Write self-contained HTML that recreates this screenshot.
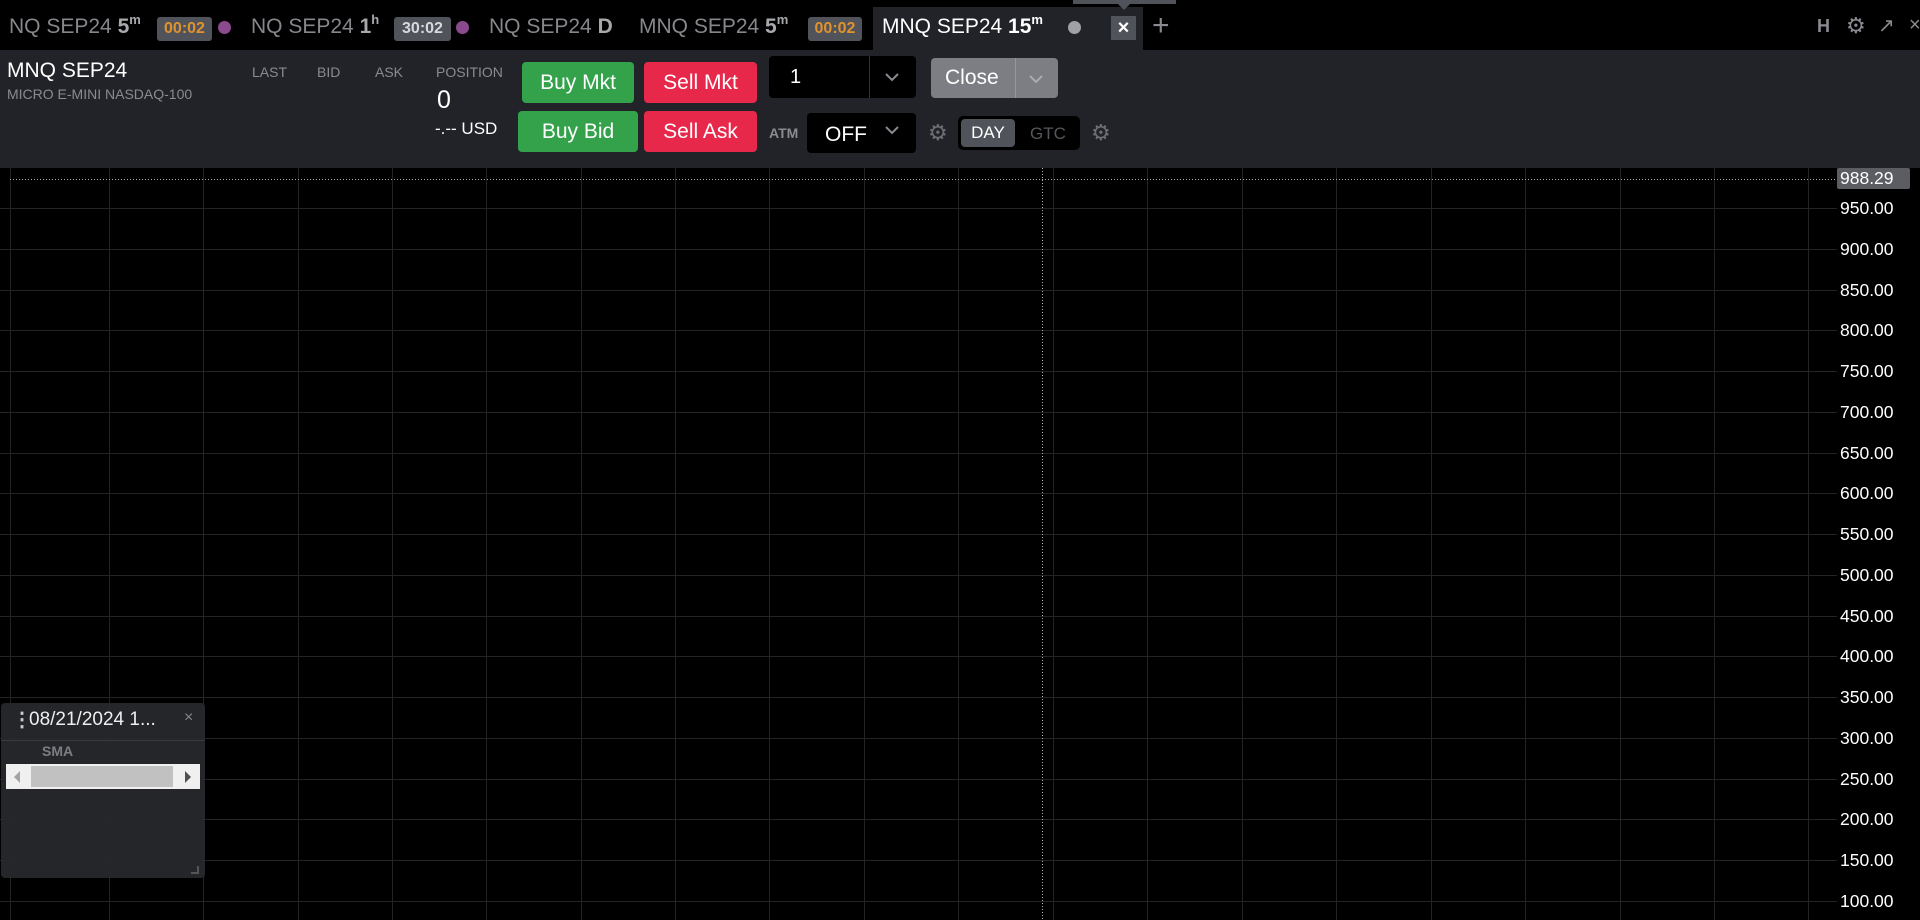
<!DOCTYPE html>
<html><head><meta charset="utf-8"><style>
*{margin:0;padding:0;box-sizing:border-box}
body{width:1920px;height:920px;background:#000;overflow:hidden;position:relative;font-family:"Liberation Sans",sans-serif;color:#fff}
.a{position:absolute;white-space:nowrap}
.tab{font-size:21px;color:#86878c;top:15px;line-height:24px}
.tab b{color:#a8a9ad}
.tab sup{font-size:13px;vertical-align:baseline;position:relative;top:-9px;line-height:0}
.badge{position:absolute;top:17px;height:24px;background:#50535a;border-radius:3px;font-size:16px;font-weight:bold;line-height:24px;text-align:center}
.dot{position:absolute;width:13px;height:13px;border-radius:50%;top:21px}
.lbl{font-size:14px;color:#8a8b90}
.btn{position:absolute;border-radius:4px;color:#fff;font-size:21px;text-align:center}
.g{background:#34a24b}.r{background:#e8284b}
.yl{position:absolute;left:1840px;font-size:17.5px;color:#fff;line-height:20px}
</style></head><body>
<!-- tab bar -->
<div class="a" style="left:0;top:0;width:1920px;height:50px;background:#000"></div>
<div class="a tab" style="left:9px">NQ SEP24 <b>5<sup>m</sup></b></div>
<div class="badge" style="left:157px;width:55px;color:#e0922e">00:02</div>
<div class="dot" style="left:218px;background:#8b4a8e"></div>
<div class="a tab" style="left:251px">NQ SEP24 <b>1<sup>h</sup></b></div>
<div class="badge" style="left:394px;width:57px;color:#d8d9dc">30:02</div>
<div class="dot" style="left:456px;background:#8b4a8e"></div>
<div class="a tab" style="left:489px">NQ SEP24 <b>D</b></div>
<div class="a tab" style="left:639px">MNQ SEP24 <b>5<sup>m</sup></b></div>
<div class="badge" style="left:808px;width:54px;color:#e0922e">00:02</div>
<div class="a" style="left:873px;top:7px;width:270px;height:43px;background:#222328"></div>
<div class="a tab" style="left:882px;color:#fff">MNQ SEP24 <b style="color:#fff">15<sup>m</sup></b></div>
<div class="dot" style="left:1068px;background:#a0a1a5"></div>
<div class="a" style="left:1111px;top:16px;width:25px;height:24px;background:#50535a;color:#fff;font-size:20px;font-weight:bold;text-align:center;line-height:24px">×</div>
<div class="a" style="left:1152px;top:9px;font-size:30px;color:#8a8b90;line-height:34px">+</div>
<div class="a" style="left:1073px;top:0;width:103px;height:4px;background:#50535a"></div>
<div class="a" style="left:1118px;top:4px;width:0;height:0;border-left:6px solid transparent;border-right:6px solid transparent;border-top:6px solid #50535a"></div>
<div class="a" style="left:1817px;top:16px;font-size:18px;font-weight:bold;color:#8a8b90">H</div>
<div class="a" style="left:1846px;top:13px;font-size:22px;color:#8a8b90">⚙</div>
<div class="a" style="left:1878px;top:13px;font-size:20px;color:#8a8b90">↗</div>
<div class="a" style="left:1909px;top:14px;font-size:20px;color:#8a8b90">×</div>
<!-- header -->
<div class="a" style="left:0;top:50px;width:1920px;height:118px;background:#222328"></div>
<div class="a" style="left:7px;top:59px;font-size:21px">MNQ SEP24</div>
<div class="a lbl" style="left:7px;top:86px">MICRO E-MINI NASDAQ-100</div>
<div class="a lbl" style="left:252px;top:64px">LAST</div>
<div class="a lbl" style="left:317px;top:64px">BID</div>
<div class="a lbl" style="left:375px;top:64px">ASK</div>
<div class="a lbl" style="left:436px;top:64px">POSITION</div>
<div class="a" style="left:437px;top:86px;font-size:25px">0</div>
<div class="a" style="left:435px;top:119px;font-size:17px">-.-- USD</div>
<div class="btn g" style="left:522px;top:62px;width:112px;height:41px;line-height:41px">Buy Mkt</div>
<div class="btn r" style="left:644px;top:62px;width:113px;height:41px;line-height:41px">Sell Mkt</div>
<div class="btn g" style="left:518px;top:111px;width:120px;height:41px;line-height:41px">Buy Bid</div>
<div class="btn r" style="left:644px;top:111px;width:113px;height:41px;line-height:41px">Sell Ask</div>
<div class="a" style="left:769px;top:56px;width:147px;height:42px;background:#000;border-radius:4px"></div>
<div class="a" style="left:869px;top:56px;width:1px;height:42px;background:#333"></div>
<div class="a" style="left:790px;top:66px;font-size:20px">1</div>
<svg class="a" style="left:884px;top:71px" width="16" height="12"><polyline points="2,3 8,9 14,3" fill="none" stroke="#8a8b90" stroke-width="2"/></svg>
<div class="a" style="left:931px;top:58px;width:127px;height:40px;background:#7c7e84;border-radius:4px"></div>
<div class="a" style="left:1015px;top:58px;width:1px;height:40px;background:#96989d"></div>
<div class="a" style="left:945px;top:66px;font-size:21px">Close</div>
<svg class="a" style="left:1028px;top:73px" width="16" height="12"><polyline points="2,3 8,9 14,3" fill="none" stroke="#a9abaf" stroke-width="2"/></svg>
<div class="a" style="left:769px;top:125px;font-size:14px;font-weight:bold;color:#8a8b90">ATM</div>
<div class="a" style="left:807px;top:113px;width:109px;height:40px;background:#000;border-radius:4px"></div>
<div class="a" style="left:825px;top:123px;font-size:21px">OFF</div>
<svg class="a" style="left:884px;top:124px" width="16" height="12"><polyline points="2,3 8,9 14,3" fill="none" stroke="#8a8b90" stroke-width="2"/></svg>
<div class="a" style="left:928px;top:120px;font-size:22px;color:#6d6f74">⚙</div>
<div class="a" style="left:958px;top:116px;width:122px;height:34px;background:#000;border-radius:5px"></div>
<div class="a" style="left:961px;top:119px;width:54px;height:28px;background:#50535a;border-radius:4px;font-size:17px;text-align:center;line-height:28px">DAY</div>
<div class="a" style="left:1030px;top:124px;font-size:17px;color:#55575c">GTC</div>
<div class="a" style="left:1091px;top:120px;font-size:22px;color:#6d6f74">⚙</div>
<!-- chart -->
<svg class="a" style="left:0;top:168px" width="1920" height="752">
<g stroke="#242424" stroke-width="1">
<line x1="10.5" y1="0" x2="10.5" y2="752"/>
<line x1="109.5" y1="0" x2="109.5" y2="752"/><line x1="203.5" y1="0" x2="203.5" y2="752"/><line x1="298.5" y1="0" x2="298.5" y2="752"/><line x1="392.5" y1="0" x2="392.5" y2="752"/><line x1="486.5" y1="0" x2="486.5" y2="752"/><line x1="581.5" y1="0" x2="581.5" y2="752"/><line x1="675.5" y1="0" x2="675.5" y2="752"/><line x1="769.5" y1="0" x2="769.5" y2="752"/><line x1="864.5" y1="0" x2="864.5" y2="752"/><line x1="958.5" y1="0" x2="958.5" y2="752"/><line x1="1053.5" y1="0" x2="1053.5" y2="752"/><line x1="1147.5" y1="0" x2="1147.5" y2="752"/><line x1="1242.5" y1="0" x2="1242.5" y2="752"/><line x1="1336.5" y1="0" x2="1336.5" y2="752"/><line x1="1431.5" y1="0" x2="1431.5" y2="752"/><line x1="1525.5" y1="0" x2="1525.5" y2="752"/><line x1="1620.5" y1="0" x2="1620.5" y2="752"/><line x1="1714.5" y1="0" x2="1714.5" y2="752"/><line x1="1808.5" y1="0" x2="1808.5" y2="752"/>
<line x1="0" y1="40.5" x2="1837" y2="40.5"/><line x1="0" y1="81.5" x2="1837" y2="81.5"/><line x1="0" y1="122.5" x2="1837" y2="122.5"/><line x1="0" y1="162.5" x2="1837" y2="162.5"/><line x1="0" y1="203.5" x2="1837" y2="203.5"/><line x1="0" y1="244.5" x2="1837" y2="244.5"/><line x1="0" y1="285.5" x2="1837" y2="285.5"/><line x1="0" y1="325.5" x2="1837" y2="325.5"/><line x1="0" y1="366.5" x2="1837" y2="366.5"/><line x1="0" y1="407.5" x2="1837" y2="407.5"/><line x1="0" y1="448.5" x2="1837" y2="448.5"/><line x1="0" y1="488.5" x2="1837" y2="488.5"/><line x1="0" y1="529.5" x2="1837" y2="529.5"/><line x1="0" y1="570.5" x2="1837" y2="570.5"/><line x1="0" y1="611.5" x2="1837" y2="611.5"/><line x1="0" y1="651.5" x2="1837" y2="651.5"/><line x1="0" y1="692.5" x2="1837" y2="692.5"/><line x1="0" y1="733.5" x2="1837" y2="733.5"/>
</g>
<line x1="10" y1="11.5" x2="1837" y2="11.5" stroke="#aaa" stroke-dasharray="1 2"/>
<line x1="1042.5" y1="0" x2="1042.5" y2="752" stroke="#aaa" stroke-dasharray="1 2"/>
</svg>
<div class="a" style="left:1837px;top:168px;width:73px;height:21px;background:#5b5d62;border-radius:2px"></div>
<div class="yl" style="top:168px">988.29</div>
<div class="yl" style="top:198px">950.00</div><div class="yl" style="top:239px">900.00</div><div class="yl" style="top:280px">850.00</div><div class="yl" style="top:320px">800.00</div><div class="yl" style="top:361px">750.00</div><div class="yl" style="top:402px">700.00</div><div class="yl" style="top:443px">650.00</div><div class="yl" style="top:483px">600.00</div><div class="yl" style="top:524px">550.00</div><div class="yl" style="top:565px">500.00</div><div class="yl" style="top:606px">450.00</div><div class="yl" style="top:646px">400.00</div><div class="yl" style="top:687px">350.00</div><div class="yl" style="top:728px">300.00</div><div class="yl" style="top:769px">250.00</div><div class="yl" style="top:809px">200.00</div><div class="yl" style="top:850px">150.00</div><div class="yl" style="top:891px">100.00</div>
<!-- legend -->
<div class="a" style="left:1px;top:703px;width:204px;height:175px;background:rgba(40,41,45,0.93);border-radius:4px"></div>
<div class="a" style="left:1px;top:740px;width:204px;height:1px;background:#3a3b40"></div>
<div class="a" style="left:12px;top:707px;font-size:20px;font-weight:bold;color:#ccc">⋮</div>
<div class="a" style="left:29px;top:709px;font-size:19px;color:#eee">08/21/2024 1...</div>
<div class="a" style="left:184px;top:709px;font-size:16px;color:#888">×</div>
<div class="a" style="left:42px;top:743px;font-size:14px;font-weight:bold;color:#7d7e83">SMA</div>
<div class="a" style="left:6px;top:764px;width:194px;height:25px;background:#f0f0f0"></div>
<div class="a" style="left:31px;top:766px;width:142px;height:21px;background:#c1c1c1"></div>
<div class="a" style="left:14px;top:771px;width:0;height:0;border-top:6px solid transparent;border-bottom:6px solid transparent;border-right:6px solid #a3a3a3"></div>
<div class="a" style="left:185px;top:771px;width:0;height:0;border-top:6px solid transparent;border-bottom:6px solid transparent;border-left:6px solid #505050"></div>
<div class="a" style="left:191px;top:866px;width:8px;height:8px;border-right:2px solid #555;border-bottom:2px solid #555"></div>
</body></html>
